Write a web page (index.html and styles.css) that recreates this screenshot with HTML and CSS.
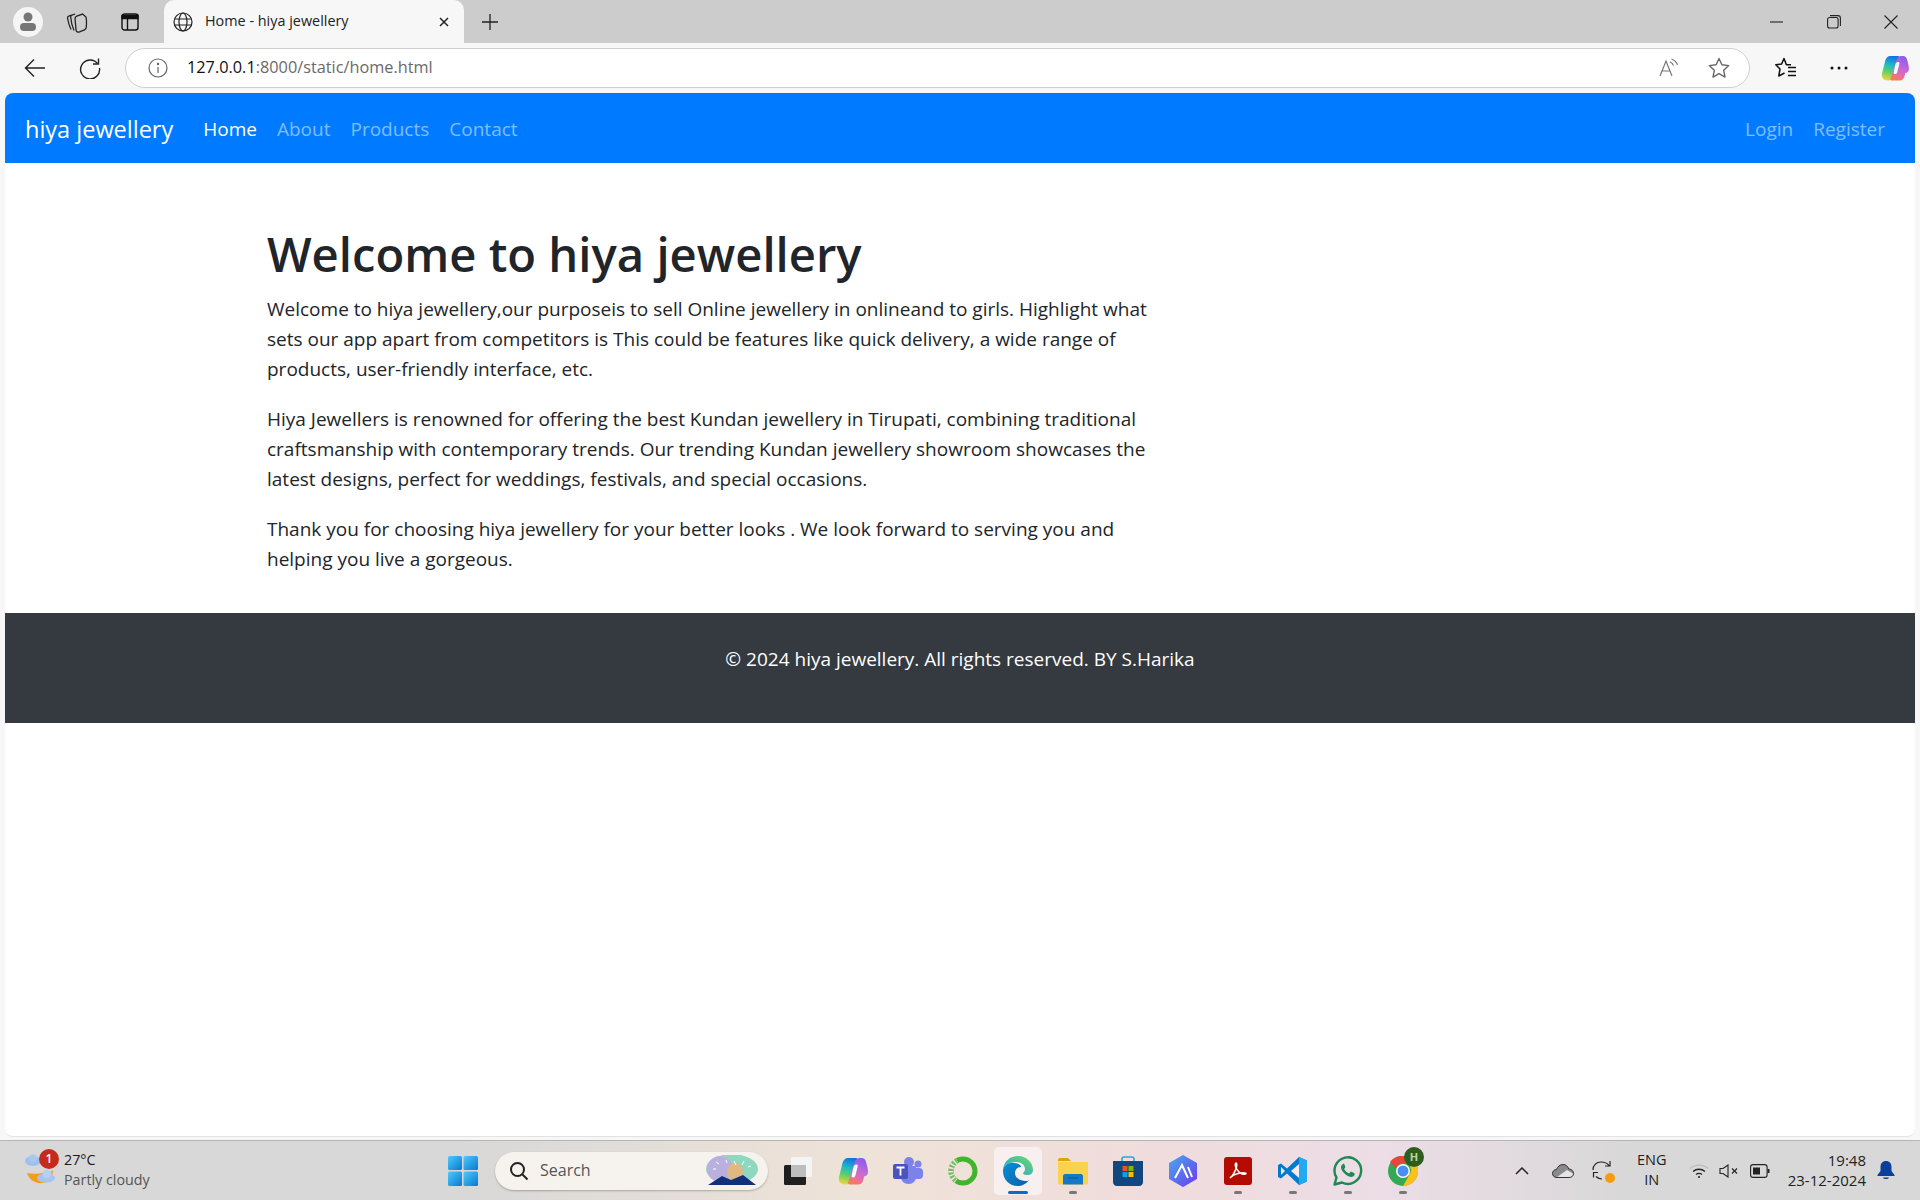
FILE: index.html
```html
<!DOCTYPE html>
<html lang="en">
<head>
    <meta charset="UTF-8">
    <meta name="viewport" content="width=device-width, initial-scale=1.0">
    <title>Home - hiya jewellery</title>
    <link rel="stylesheet" href="styles.css">
</head>
<body>
    <svg class="defs" width="0" height="0" aria-hidden="true">
        <defs>
            <linearGradient id="copL" x1="0.5" y1="0" x2="0.3" y2="1">
                <stop offset="0" stop-color="#1273e0"/>
                <stop offset="0.35" stop-color="#20b8c8"/>
                <stop offset="0.65" stop-color="#5fd068"/>
                <stop offset="1" stop-color="#f4d63c"/>
            </linearGradient>
            <linearGradient id="copR" x1="0.6" y1="0" x2="0.3" y2="1">
                <stop offset="0" stop-color="#8a5ce8"/>
                <stop offset="0.5" stop-color="#c868d8"/>
                <stop offset="0.8" stop-color="#ee6e9a"/>
                <stop offset="1" stop-color="#f58040"/>
            </linearGradient>
            <linearGradient id="edgeA" x1="0" y1="0" x2="1" y2="1">
                <stop offset="0" stop-color="#0c8fd6"/>
                <stop offset="1" stop-color="#0a5ea8"/>
            </linearGradient>
            <linearGradient id="edgeB" x1="0" y1="1" x2="1" y2="0">
                <stop offset="0" stop-color="#1d9ed9"/>
                <stop offset="1" stop-color="#6fdc6a"/>
            </linearGradient>
            <linearGradient id="winG" x1="0" y1="0" x2="1" y2="1">
                <stop offset="0" stop-color="#4fcbf9"/>
                <stop offset="1" stop-color="#0678d4"/>
            </linearGradient>
            <linearGradient id="atlasG" x1="0" y1="0" x2="1" y2="1">
                <stop offset="0" stop-color="#4aa6ee"/>
                <stop offset="1" stop-color="#6a3df0"/>
            </linearGradient>
            <symbol id="copilot" viewBox="0 0 30 28">
                <path d="M10 1h8c1.500 0 2.200 1 1.800 2.300L13 24c-.8 2.300-2.600 3.500-5 3.500H6.500C2.500 27.500 0 24.500 1 20L4.500 6C5.300 3 7.300 1 10 1z" fill="url(#copL)"/>
                <path d="M20.500 27.500h-8.500c-1.500 0-2.200-1-1.800-2.300L17 4.500C17.800 2.200 19.600 1 22 1h1.500c2.500 0 4 1.500 4.500 4 1 3.500 2 7 2 10 0 2.500-1.500 4-4 4.500-.5 5-2.500 8-5.500 8z" fill="url(#copR)"/>
                <path d="M15.500 20.500c-1.500 0-2.200-1-1.800-2.300L15.500 10c.4-1.500 1.200-2.500 3-2.500 1 0 1.500.7 1.200 1.800l-2 8c-.4 1.800-.9 3.200-2.200 3.200z" fill="#fff"/>
            </symbol>
        </defs>
    </svg>

    <div class="browser">
        <header class="tabstrip">
            <div class="strip-left">
                <span class="profile">
                    <svg width="18" height="20" viewBox="0 0 18 20"><circle cx="9" cy="5" r="4.500" fill="#777"/><rect x="1" y="11" width="16" height="8" rx="4" fill="#777"/></svg>
                </span>
                <svg class="strip-icon" width="22" height="22" viewBox="0 0 22 22" fill="none" stroke="#222" stroke-width="1.300"><path d="M5 18.500C3.500 15 2 10 1.500 7c0-1 .3-1.500 1.200-1.800l3-1"/><path d="M8 19.500C6.500 16 5 10 4.700 6c0-1 .3-1.500 1.200-1.800l3.300-1.200"/><path d="M9 7.500c0-1.200.6-2 1.800-2.400l5.700-2 3.500 3c.5 2 .7 5 .3 9.900 0 1.500-.6 2.300-1.800 2.800l-5 2c-1.800.6-3 .2-3.400-1.500z"/></svg>
                <svg class="strip-icon" width="18" height="18" viewBox="0 0 18 18" fill="none" stroke="#111" stroke-width="1.400"><rect x="1" y="1" width="16" height="16" rx="2.500"/><path d="M1 2.500h16v3H1z" fill="#111"/><path d="M6.500 5v12"/></svg>
            </div>
            <div class="tab">
                <svg width="20" height="20" viewBox="0 0 20 20" fill="none" stroke="#222" stroke-width="1.200"><circle cx="10" cy="10" r="9"/><ellipse cx="10" cy="10" rx="4" ry="9"/><path d="M1.500 7h17M1.500 13h17"/></svg>
                <span class="tab-title">Home - hiya jewellery</span>
                <svg class="tab-close" width="12" height="12" viewBox="0 0 12 12" stroke="#222" stroke-width="1.500"><path d="M2 2l8 8M10 2l-8 8"/></svg>
            </div>
            <svg class="new-tab" width="18" height="18" viewBox="0 0 18 18" stroke="#222" stroke-width="1.300"><path d="M9 1v16M1 9h16"/></svg>
            <div class="win-controls">
                <svg width="14" height="14" viewBox="0 0 14 14" stroke="#222" stroke-width="1.100"><path d="M0 7h13"/></svg>
                <svg width="14" height="14" viewBox="0 0 14 14" fill="none" stroke="#222" stroke-width="1.100"><rect x=".6" y="2.500" width="10.500" height="10.500" rx="2"/><path d="M3 .6h8c1.400 0 2.400 1 2.400 2.400v8"/></svg>
                <svg width="14" height="14" viewBox="0 0 14 14" stroke="#222" stroke-width="1.100"><path d="M.5.500l13 13M13.500.500l-13 13"/></svg>
            </div>
        </header>

        <div class="toolbar">
            <svg class="tool-btn" width="22" height="20" viewBox="0 0 22 20" fill="none" stroke="#222" stroke-width="1.400"><path d="M21 10H1.500M10 1.500L1.500 10l8.500 8.500"/></svg>
            <svg class="tool-btn" width="22" height="22" viewBox="0 0 22 22" fill="none" stroke="#222" stroke-width="1.400"><path d="M18.500 6.500A9.500 9.500 0 1 0 20.500 11"/><path d="M19.500 1.500v5.500H14"/></svg>
            <div class="addressbar">
                <svg width="20" height="20" viewBox="0 0 20 20" fill="none" stroke="#666" stroke-width="1.200"><circle cx="10" cy="10" r="9"/><path d="M10 9v6"/><circle cx="10" cy="6" r=".6" fill="#666"/></svg>
                <span class="url"><span class="url-host">127.0.0.1</span>:8000/static/home.html</span>
                <svg class="read-aloud" width="20" height="20" viewBox="0 0 20 20" fill="none" stroke="#777" stroke-width="1.200"><path d="M1 18L7 3l6 15M3 13h8"/><path d="M11 4c2 .8 3 2 3.500 3.500M12.500 1c3 1.200 5 3 6 6"/></svg>
                <svg class="addr-star" width="22" height="22" viewBox="0 0 22 22" fill="none" stroke="#666" stroke-width="1.400" stroke-linejoin="round"><path d="M11 1.500l2.900 6.300 6.800.8-5 4.700 1.300 6.800-6-3.400-6 3.400 1.300-6.800-5-4.700 6.800-.8z"/></svg>
            </div>
            <div class="toolbar-right">
                <svg width="22" height="22" viewBox="0 0 22 22" fill="none" stroke="#111" stroke-width="1.500" stroke-linejoin="round"><path d="M16 7.800h-4.600L9 1.500 6.600 7 .8 7.800 5 12l-1.200 7 5.700-3"/><path d="M13 10.500h8M13 14.500h8M13 18.500h8"/></svg>
                <svg width="18" height="4" viewBox="0 0 18 4" fill="#111"><circle cx="2" cy="2" r="1.500"/><circle cx="9" cy="2" r="1.500"/><circle cx="16" cy="2" r="1.500"/></svg>
                <svg width="28" height="26"><use href="#copilot"/></svg>
            </div>
        </div>

        <div class="viewport">
            <nav class="navbar">
                <a class="brand" href="#">hiya jewellery</a>
                <ul class="nav-links">
                    <li><a class="active" href="#">Home</a></li>
                    <li><a href="#">About</a></li>
                    <li><a href="#">Products</a></li>
                    <li><a href="#">Contact</a></li>
                </ul>
                <ul class="nav-links nav-right">
                    <li><a href="#">Login</a></li>
                    <li><a href="#">Register</a></li>
                </ul>
            </nav>
            <main class="container">
                <h1>Welcome to hiya jewellery</h1>
                <p>Welcome to hiya jewellery,our purposeis to sell Online jewellery in onlineand to girls. Highlight what sets our app apart from competitors is This could be features like quick delivery, a wide range of products, user-friendly interface, etc.</p>
                <p>Hiya Jewellers is renowned for offering the best Kundan jewellery in Tirupati, combining traditional craftsmanship with contemporary trends. Our trending Kundan jewellery showroom showcases the latest designs, perfect for weddings, festivals, and special occasions.</p>
                <p>Thank you for choosing hiya jewellery for your better looks . We look forward to serving you and helping you live a gorgeous.</p>
            </main>
            <footer class="site-footer">
                <p>© 2024 hiya jewellery. All rights reserved. BY S.Harika</p>
            </footer>
        </div>

        <div class="taskbar">
            <div class="weather">
                <span class="weather-icon">
                    <svg width="34" height="36" viewBox="0 0 34 36">
                        <path d="M3 20c2 7 9 11 16 10 6-1 10-6 10-13-3 3-6 3-10 3-5 1-11 1-16 0z" fill="#f59b1f"/>
                        <ellipse cx="9" cy="8" rx="8" ry="5" fill="#9dc0ee"/>
                        <circle cx="9" cy="5.500" r="4" fill="#a9c8f0"/>
                        <ellipse cx="22" cy="25" rx="9" ry="4.500" fill="#a5c4ef"/>
                        <circle cx="23" cy="21" r="4.500" fill="#b5d0f3"/>
                    </svg>
                    <span class="weather-badge">1</span>
                </span>
                <div class="weather-text">
                    <div class="temp">27°C</div>
                    <div class="cond">Partly cloudy</div>
                </div>
            </div>

            <div class="taskbar-center">
                <span class="slot slot-start">
                    <svg width="30" height="30" viewBox="0 0 30 30" fill="url(#winG)"><rect width="14" height="14" rx="1.500"/><rect x="15.500" width="14.500" height="14" rx="1.500"/><rect y="15.500" width="14" height="14.500" rx="1.500"/><rect x="15.500" y="15.500" width="14.500" height="14.500" rx="1.500"/></svg>
                </span>
                <div class="searchbox">
                    <svg width="20" height="20" viewBox="0 0 20 20" fill="none" stroke="#222" stroke-width="2"><circle cx="8.500" cy="8.500" r="6.500"/><path d="M13.500 13.500l5 5"/></svg>
                    <span class="search-label">Search</span>
                    <svg class="search-art" width="56" height="32" viewBox="0 0 56 32">
                        <ellipse cx="28" cy="14" rx="26" ry="15" fill="#8fd8c0"/>
                        <ellipse cx="16" cy="14" rx="13" ry="13" fill="#b9b0e0"/>
                        <ellipse cx="31" cy="17" rx="8" ry="9" fill="#e0b880"/>
                        <path d="M4 30l14-9 9 4 5-2 7-3 13 10z" fill="#10307a"/>
                        <path d="M12 7l3 2M22 5l1 3M30 6l2 4M40 6l-2 4M47 11l-3 1M9 14l3 0" stroke="#fff" stroke-width="1"/>
                    </svg>
                </div>
                <span class="slot">
                    <svg width="30" height="30" viewBox="0 0 30 30"><rect x="8" y="1" width="21" height="20" rx="1" fill="#f4f4f4"/><rect x="1" y="9" width="22" height="20" rx="1.500" fill="#1f1f1f"/><rect x="8" y="9" width="15" height="12" fill="#bdbdbd"/></svg>
                </span>
                <span class="slot"><svg width="30" height="28"><use href="#copilot"/></svg></span>
                <span class="slot">
                    <svg width="30" height="28" viewBox="0 0 30 28"><circle cx="25" cy="7" r="3.500" fill="#7b83eb"/><rect x="20" y="11" width="10" height="11" rx="4" fill="#7b83eb"/><circle cx="16" cy="5" r="5" fill="#7b83eb"/><path d="M8 9h15v11c0 4-3 7-7.500 7S8 24 8 20z" fill="#7b83eb"/><rect y="7" width="15" height="15" rx="2" fill="#4b53bc"/><path d="M3.500 10.500h8M7.500 10.500v8" stroke="#fff" stroke-width="1.800"/></svg>
                </span>
                <span class="slot">
                    <svg width="30" height="30" viewBox="0 0 30 30" fill="none"><circle cx="15" cy="15" r="12" stroke="#40b52a" stroke-width="5"/><path d="M9 4.500A12 12 0 0 0 8 24.800" stroke="#f0e4e4" stroke-width="5"/><path d="M9 4.500A12 12 0 0 0 8 24.800" stroke="#6fbf5c" stroke-width="5" stroke-dasharray="2 1.500"/></svg>
                </span>
                <span class="slot slot-active">
                    <svg width="32" height="32" viewBox="0 0 32 32"><path d="M1 15C2 6 8 1 16 1c9 0 15 7 15 14 0 3-2 5-6 5-3 0-4-1-4-2 1-1 2-2 2-4 0-4-4-7-8-7C8 7 2 9 1 15z" fill="url(#edgeB)"/><path d="M1 15c1-5 6-8 11-7 4 0 7 2 7 4-3 0-6 2-6 6 0 5 5 8 10 8 2 0 3 0 4-1-3 4-7 6-11 6C7 31 .500 24 1 15z" fill="url(#edgeA)"/></svg>
                    <i class="indicator-active"></i>
                </span>
                <span class="slot slot-running">
                    <svg width="30" height="28" viewBox="0 0 30 28"><path d="M0 3c0-1 .8-2 2-2h8l3 3h-13z" fill="#dfa30f"/><path d="M0 5h30v21c0 1-.8 1.500-1.500 1.500h-27C.8 27.500 0 27 0 26z" fill="#fbd24e"/><path d="M5 19c0-1 1-2 2-2h16c1 0 2 1 2 2v8.500H5z" fill="#1478c8"/><path d="M10 21h10" stroke="#0d5a9e" stroke-width="1.200"/></svg>
                    <i class="indicator"></i>
                </span>
                <span class="slot">
                    <svg width="30" height="30" viewBox="0 0 30 30"><path d="M9 6V3c0-1 .7-2 2-2h8c1.300 0 2 1 2 2v3" fill="none" stroke="#24a9e0" stroke-width="1.600"/><path d="M0 5h30v21c0 2-1.500 4-4 4H4c-2.500 0-4-2-4-4z" fill="#12467e"/><rect x="9.500" y="10" width="5" height="5" fill="#f25022"/><rect x="15.500" y="10" width="5" height="5" fill="#7fba00"/><rect x="9.500" y="16" width="5" height="5" fill="#00a4ef"/><rect x="15.500" y="16" width="5" height="5" fill="#ffb900"/></svg>
                </span>
                <span class="slot">
                    <svg width="30" height="32" viewBox="0 0 30 32"><path d="M15 1l13 7.500v15L15 31 2 23.500v-15z" fill="url(#atlasG)" stroke="url(#atlasG)" stroke-width="2" stroke-linejoin="round"/><path d="M7 23L14 10l6 13M20 12l4 10" fill="none" stroke="#fff" stroke-width="2"/></svg>
                </span>
                <span class="slot slot-running">
                    <svg width="28" height="28" viewBox="0 0 28 28"><rect width="28" height="28" rx="3" fill="#b30b00"/><path d="M6 21c3-2 5-6 6.500-11 .5-2 .5-4-.5-4s-1 3 0 5c1.500 3 4 5 6 6 2 .5 4 .5 4-.5s-4-1-8 0c-3 .8-6 2-8 4.500z" fill="none" stroke="#fff" stroke-width="1.500"/></svg>
                    <i class="indicator"></i>
                </span>
                <span class="slot slot-running">
                    <svg width="30" height="30" viewBox="0 0 30 30"><path d="M21 1l8 3.500v21L21 29 9 17.500 3 22.500 0 21V9l3-1.500 6 5z" fill="#007acc"/><path d="M21 1l8 3.500v21L21 29z" fill="#23a8f2"/><path d="M21 8l-8 7 8 7z" fill="#f4e9ec"/><path d="M3 11v8l4-4z" fill="#f4e9ec"/></svg>
                    <i class="indicator"></i>
                </span>
                <span class="slot slot-running">
                    <svg width="30" height="30" viewBox="0 0 30 30" fill="none"><path d="M1.500 28.500l2-7A13.300 13.300 0 1 1 9 26.500z" stroke="#1c8a52" stroke-width="2.400" stroke-linejoin="round"/><path d="M10 8c-2 1-2.500 3-1.500 5.500 1.500 3 4 5.500 7.500 7 2.500 1 4.500.5 5.500-1.500.3-1 .3-1.500-.5-2l-2.500-1.200c-.6-.2-1-.1-1.400.4l-1 1.200c-2-.7-3.800-2.500-5-4.500l.9-1c.4-.5.4-1 .2-1.500L11.300 8.300c-.3-.6-.8-.6-1.300-.3z" fill="#1c8a52"/></svg>
                    <i class="indicator"></i>
                </span>
                <span class="slot slot-running">
                    <svg width="30" height="30" viewBox="0 0 30 30"><circle cx="15" cy="15" r="15" fill="#34a853"/><path d="M15 0a15 15 0 0 1 13 7.500H15a7.500 7.500 0 0 0-7 4.500L2 6A15 15 0 0 1 15 0z" fill="#e8453c"/><path d="M28 7.500A15 15 0 0 1 15 30l6.500-11.500A7.500 7.500 0 0 0 21 9z" fill="#fbc116"/><circle cx="15" cy="15" r="7" fill="#fff"/><circle cx="15" cy="15" r="5.500" fill="#4b8cf5"/></svg>
                    <span class="chrome-badge">H</span>
                    <i class="indicator"></i>
                </span>
            </div>

            <div class="tray">
                <svg class="tray-chevron" width="14" height="8" viewBox="0 0 14 8" fill="none" stroke="#222" stroke-width="1.500"><path d="M1 7l6-6 6 6"/></svg>
                <svg class="tray-cloud" width="22" height="14" viewBox="0 0 22 14"><path d="M5 13.500C2 13.500.5 11.500.5 9.500 .5 7 2.500 5.500 4.500 5.500 5.500 2.500 8 .5 11 .500c3 0 5 2 5.800 4.500 2.700 0 4.700 2 4.700 4.500s-2 4-4.500 4z" fill="#8a8a8a" stroke="#333" stroke-width="1"/><path d="M5 13h12c2 0 4-1.500 4-3.500L15 6z" fill="#e4e4e4"/></svg>
                <span class="tray-sync">
                    <svg width="20" height="22" viewBox="0 0 20 22" fill="none" stroke="#222" stroke-width="1.200"><path d="M1 10C1 5 4.500 2 9 2c3 0 6 1 8 3.500M18 1v5h-5M4 16.500c1.500 1.500 3 2.500 6 2.500M1 12.500h5M1.500 12.500v5"/></svg>
                    <i class="sync-dot"></i>
                </span>
                <div class="lang"><div>ENG</div><div>IN</div></div>
                <svg class="tray-wifi" width="20" height="16" viewBox="0 0 20 16" fill="none" stroke="#222" stroke-width="1.300"><path d="M1 5.500C6 1 14 1 19 5.500" stroke="#bbb"/><path d="M4 8.500c3.500-3 8.500-3 12 0"/><path d="M7 11.500c2-1.500 4-1.500 6 0"/><circle cx="10" cy="14" r="1" fill="#222" stroke="none"/></svg>
                <svg class="tray-vol" width="20" height="14" viewBox="0 0 20 14" fill="none" stroke="#222" stroke-width="1.100"><path d="M1 4.500h3L9 1v12L4 9.500H1z"/><path d="M13 4.500l5 5M18 4.500l-5 5"/></svg>
                <svg class="tray-batt" width="20" height="14" viewBox="0 0 20 14"><rect x=".6" y=".6" width="16.500" height="12.800" rx="2.500" fill="none" stroke="#222" stroke-width="1.100"/><rect x="3" y="3.500" width="7" height="7" fill="#222"/><rect x="17.500" y="5" width="2" height="4" fill="#222"/></svg>
                <div class="clock"><div>19:48</div><div>23-12-2024</div></div>
                <svg class="tray-bell" width="18" height="20" viewBox="0 0 18 20" fill="#0a3f9c"><path d="M9 0c3.500 0 5.500 2.500 5.500 6v4l3 4c.3.600 0 1-.6 1H1.100c-.6 0-.9-.4-.6-1l3-4V6C3.500 2.500 5.500 0 9 0z"/><path d="M6 16.500h6c-.5 2-5.500 2-6 0z"/></svg>
            </div>
        </div>
    </div>
</body>
</html>
```

FILE: styles.css
```css
* {
    margin: 0;
    padding: 0;
    box-sizing: border-box;
}

body {
    font-family: 'Open Sans', 'Noto Sans', sans-serif;
    background: #f7f7f7;
    color: #212529;
}

.defs {
    position: absolute;
}

.browser {
    display: flex;
    flex-direction: column;
    height: 1200px;
    overflow: hidden;
}

/* tab strip */
.tabstrip {
    display: flex;
    align-items: center;
    height: 43px;
    background: #cccccc;
    flex-shrink: 0;
}

.strip-left {
    display: flex;
    align-items: center;
    width: 164px;
    padding-left: 13px;
}

.profile {
    display: flex;
    align-items: center;
    justify-content: center;
    width: 30px;
    height: 30px;
    border-radius: 50%;
    background: #f5f5f5;
}

.strip-icon {
    margin-left: 23px;
}

.strip-icon + .strip-icon {
    margin-left: 33px;
}

.tab {
    display: flex;
    align-items: center;
    align-self: stretch;
    width: 300px;
    padding: 0 14px 0 9px;
    background: #f7f7f7;
    border-radius: 10px 10px 0 0;
}

.tab-title {
    margin: 0 0 2px 12px;
    font-size: 14.4px;
    color: #222;
    flex: 1;
    white-space: nowrap;
}

.new-tab {
    margin-left: 17px;
}

.win-controls {
    display: flex;
    align-items: center;
    gap: 43px;
    margin-left: auto;
    padding-right: 22px;
}

/* address row */
.toolbar {
    display: flex;
    align-items: center;
    height: 50px;
    padding-left: 24px;
    background: #f7f7f7;
    flex-shrink: 0;
}

.tool-btn + .tool-btn {
    margin-left: 33px;
}

.addressbar {
    display: flex;
    align-items: center;
    width: 1625px;
    height: 40px;
    margin-left: 24px;
    padding: 0 19px 0 22px;
    background: #fff;
    border: 1px solid #cfcfcf;
    border-radius: 20px;
}

.url {
    margin: 0 0 2px 19px;
    font-size: 16.3px;
    color: #6a6a6a;
    flex: 1;
}

.url-host {
    color: #111;
}

.addr-star {
    margin-left: 29px;
}

.toolbar-right {
    display: flex;
    align-items: center;
    gap: 33px;
    margin-left: 25px;
}

/* page */
.viewport {
    flex: 1;
    margin: 0 5px 3px;
    background: #fff;
    border-bottom: 1px solid #e2e2e2;
    border-radius: 8px;
    overflow: hidden;
}

.navbar {
    display: flex;
    align-items: center;
    height: 70px;
    padding: 1px 20px 0;
    background: #007bff;
}

.navbar a {
    text-decoration: none;
}

.brand {
    margin-right: 20px;
    font-size: 23.5px;
    color: #fff;
    white-space: nowrap;
}

.nav-links {
    display: flex;
    list-style: none;
}

.nav-links a {
    display: block;
    padding: 0 10px;
    font-size: 19px;
    color: rgba(255, 255, 255, 0.5);
    white-space: nowrap;
}

.nav-links a.active {
    color: #fff;
}

.nav-right {
    margin-left: auto;
}

.container {
    width: 950px;
    margin-left: 243px;
    padding: 61px 19px 19px;
}

h1 {
    margin-bottom: 10px;
    font-size: 47.2px;
    line-height: 60px;
    font-weight: 600;
}

.container p {
    margin-bottom: 20px;
    font-size: 19px;
    line-height: 30px;
}

.site-footer {
    height: 110px;
    padding-top: 31px;
    background: #343a40;
    color: #fff;
    text-align: center;
    font-size: 19px;
    line-height: 30px;
}

/* windows taskbar */
.taskbar {
    position: relative;
    display: flex;
    align-items: center;
    height: 60px;
    background: linear-gradient(90deg, #d8d8d8 0%, #d8d8d8 24%, #efe3d8 45%, #f0dcdc 60%, #ecdde6 72%, #d8d8d8 85%, #d8d8d8 100%);
    border-top: 1px solid #b5b5b5;
    flex-shrink: 0;
}

.weather {
    display: flex;
    align-items: center;
    width: 435px;
    padding-left: 24px;
}

.weather-icon {
    position: relative;
    display: block;
    width: 40px;
    height: 36px;
}

.weather-badge {
    position: absolute;
    top: -4px;
    left: 15px;
    width: 20px;
    height: 20px;
    border-radius: 50%;
    background: #c42b1c;
    color: #fff;
    font-size: 12px;
    font-weight: 600;
    line-height: 20px;
    text-align: center;
}

.weather-text {
    margin-bottom: 2px;
}

.temp {
    font-size: 14.3px;
    line-height: 20px;
    color: #1a1a1a;
}

.cond {
    font-size: 14.3px;
    line-height: 20px;
    color: #555;
}

.taskbar-center {
    display: flex;
    align-items: center;
}

.slot {
    position: relative;
    display: flex;
    align-items: center;
    justify-content: center;
    width: 55px;
    height: 48px;
}

.slot-start {
    width: 55px;
}

.slot-active {
    width: 48px;
    margin: 0 3.500px;
    background: #f7eff0;
    border-radius: 5px;
}

.indicator,
.indicator-active {
    position: absolute;
    bottom: 1px;
    left: 50%;
    width: 8px;
    height: 3px;
    margin-left: -4px;
    border-radius: 2px;
    background: #777;
}

.indicator-active {
    width: 20px;
    margin-left: -10px;
    background: #0a6cc4;
}

.chrome-badge {
    position: absolute;
    top: 0;
    left: 29px;
    width: 20px;
    height: 20px;
    border-radius: 50%;
    background: #2e5d1e;
    color: #b8d8a8;
    font-size: 11px;
    font-weight: 700;
    line-height: 20px;
    text-align: center;
}

.searchbox {
    display: flex;
    align-items: center;
    width: 273px;
    height: 38px;
    margin: 0 2px 0 5px;
    padding: 0 8px 0 14px;
    background: #f6f3ef;
    border-radius: 19px;
    box-shadow: 0 1px 2px rgba(0, 0, 0, 0.25);
}

.search-label {
    margin: 0 0 1px 11px;
    font-size: 16px;
    color: #555;
    flex: 1;
}

.tray {
    display: flex;
    align-items: center;
    margin-left: auto;
    padding-right: 25px;
}

.tray-chevron {
    margin-right: 23px;
}

.tray-cloud {
    margin-right: 18px;
}

.tray-sync {
    position: relative;
    display: block;
    width: 20px;
    height: 22px;
    margin-right: 22.5px;
}

.sync-dot {
    position: absolute;
    right: -3px;
    bottom: -1px;
    width: 10px;
    height: 10px;
    border-radius: 50%;
    background: #f99b0d;
}

.lang {
    width: 34px;
    margin-bottom: 2px;
    font-size: 14.5px;
    line-height: 20px;
    text-align: center;
    color: #222;
}

.tray-wifi {
    margin-left: 20px;
}

.tray-vol {
    margin-left: 10px;
}

.tray-batt {
    margin-left: 11px;
}

.clock {
    margin: 0 0 2px 18px;
    font-size: 15px;
    line-height: 20px;
    text-align: right;
    color: #222;
}

.tray-bell {
    margin-left: 11px;
}
```
